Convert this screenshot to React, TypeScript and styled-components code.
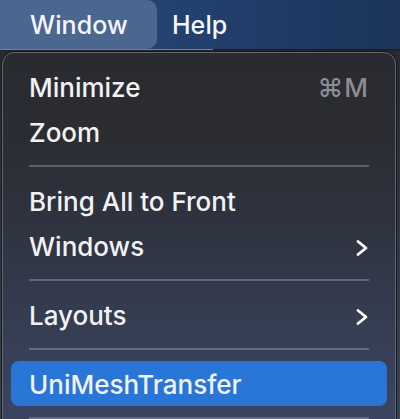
import React from "react";
import styled, { createGlobalStyle } from "styled-components";

const Global = createGlobalStyle`
  html, body { margin: 0; padding: 0; }
  body {
    width: 400px;
    height: 419px;
    overflow: hidden;
    background: linear-gradient(to bottom, #25272c 0%, #2c3140 40%, #3a4358 100%);
    font-family: Inter, "Noto Sans", sans-serif;
    -webkit-font-smoothing: antialiased;
  }
`;

const MenuBar = styled.div`
  display: flex;
  align-items: center;
  height: 49px;
  background: linear-gradient(to right, #2c4b7b 0%, #22406e 50%, #1c3459 100%);
`;

const MenuTitle = styled.div<{ $active?: boolean }>`
  display: flex;
  align-items: center;
  height: 49px;
  padding: 0 ${(p) => (p.$active ? "29px" : "16px")} 0 ${(p) => (p.$active ? "30px" : "15px")};
  border-radius: 0 10px 10px 0;
  background: ${(p) => (p.$active ? "#4b6790" : "transparent")};
  color: #f4f6fa;
  font-size: 25px;
  font-weight: 500;
  letter-spacing: 0.1px;
`;

const BarEdge = styled.div`
  height: 1px;
  background: linear-gradient(to right, #3c93c4 0, #3c93c4 213px, #161c28 213px);
`;

const Gap = styled.div`
  height: 2px;
  background: #24262b;
`;

const Menu = styled.div`
  margin: 0 4px 0 2px;
  border: 1px solid #66676c;
  box-shadow: 0 0 0 1px #16171a;
  border-radius: 12px;
  padding-top: 11px;
  height: 420px;
  background: linear-gradient(
    to bottom,
    #2a2b30 0%,
    #2b2d33 20%,
    #2f3441 42%,
    #353d52 62%,
    #3a4460 82%,
    #3c4764 100%
  );
  display: flex;
  flex-direction: column;
`;

const Item = styled.div<{ $active?: boolean }>`
  display: flex;
  align-items: center;
  justify-content: space-between;
  height: 45px;
  margin: 0 8px;
  padding: 0 18px;
  border-radius: 8px;
  background: ${(p) => (p.$active ? "#2a76d6" : "transparent")};
  color: #f2f2f4;
  font-size: 26px;
  font-weight: 500;
`;

const Label = styled.span`
  padding-top: 2px;
`;

const Shortcut = styled.span`
  color: #8c8d92;
  font-size: 26px;
  font-weight: 500;
  padding-top: 2px;
  letter-spacing: 1px;
`;

const Separator = styled.div`
  height: 24px;
  margin: 0 26px;
  display: flex;
  align-items: center;
  &::before {
    content: "";
    flex: 1;
    height: 2px;
    background: rgba(150, 160, 180, 0.45);
  }
`;

const Chevron = () => (
  <svg width="14" height="18" viewBox="0 0 14 18" style={{ marginTop: 4 }}>
    <polyline
      points="3,2.5 11,9 3,15.5"
      fill="none"
      stroke="#ffffff"
      strokeWidth="2.8"
      strokeLinecap="round"
      strokeLinejoin="round"
    />
  </svg>
);

export default function App() {
  return (
    <>
      <Global />
      <MenuBar>
        <MenuTitle $active>Window</MenuTitle>
        <MenuTitle>Help</MenuTitle>
      </MenuBar>
      <BarEdge />
      <Gap />
      <Menu>
        <Item>
          <Label>Minimize</Label>
          <Shortcut>⌘M</Shortcut>
        </Item>
        <Item>
          <Label>Zoom</Label>
        </Item>
        <Separator />
        <Item>
          <Label>Bring All to Front</Label>
        </Item>
        <Item>
          <Label>Windows</Label>
          <Chevron />
        </Item>
        <Separator />
        <Item>
          <Label>Layouts</Label>
          <Chevron />
        </Item>
        <Separator />
        <Item $active>
          <Label>UniMeshTransfer</Label>
        </Item>
        <Separator />
      </Menu>
    </>
  );
}
